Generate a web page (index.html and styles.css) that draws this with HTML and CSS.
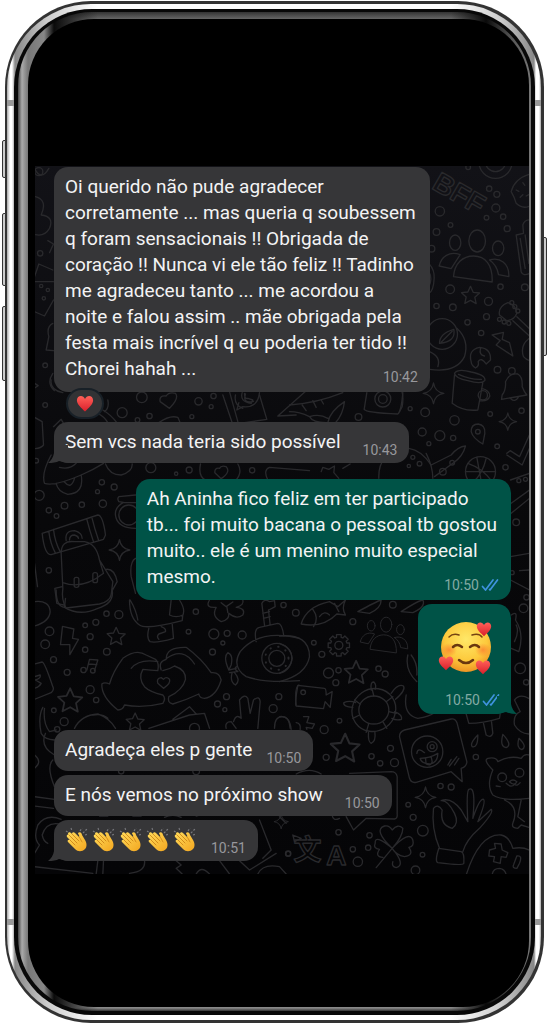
FILE: index.html
```html
<!DOCTYPE html>
<html lang="pt-BR">
<head>
<meta charset="utf-8">
<meta name="viewport" content="width=device-width, initial-scale=1">
<title>Conversa</title>
<link rel="stylesheet" href="styles.css">
</head>
<body>
<svg class="defs" aria-hidden="true">
  <defs>
    <radialGradient id="skin" cx=".5" cy=".35" r=".65"><stop offset="0" stop-color="#ffe868"/><stop offset=".65" stop-color="#fdc93c"/><stop offset="1" stop-color="#ee9424"/></radialGradient>
    <radialGradient id="blush"><stop offset="0" stop-color="#fb8030" stop-opacity=".8"/><stop offset="1" stop-color="#fb8030" stop-opacity="0"/></radialGradient>
    <linearGradient id="red" x2="0" y2="1"><stop offset="0" stop-color="#ff6058"/><stop offset="1" stop-color="#d91f2b"/></linearGradient>
    <linearGradient id="hand" x2="1" y2="1"><stop offset="0" stop-color="#ffdc5c"/><stop offset="1" stop-color="#f3a61f"/></linearGradient>
    <symbol id="heart" viewBox="0 0 20 20"><path fill="url(#red)" d="M10 19C6 15 1 11 1 6.500C1 1 8 0 10 5C12 0 19 1 19 6.500C19 11 14 15 10 19Z"/></symbol>
    <symbol id="ticks" viewBox="0 0 18 14"><path fill="none" stroke="#3f93df" stroke-width="1.700" stroke-linecap="round" stroke-linejoin="round" d="M1.500 8.500L4.500 12L12 2M8.500 11.500L9 12L16.500 2"/></symbol>
    <symbol id="clap" viewBox="0 0 24 26">
      <path fill="none" stroke="#77777c" stroke-width="1.200" stroke-dasharray="2 1.500" d="M1 4L4 6M6 1L7 4M15 4L17 1M18 6L22 2M20 8L23 7"/>
      <path fill="url(#hand)" d="M13 6C15 4 17 6 17 8L20 13C22 16 22 20 20 22C17 25 13 25 10 22L3 15C2 14 3 12 5 13L2 10C1 8 3 7 4 8L3 7C3 5 5 5 6 6L7 7C7 5 9 5 10 6L14 10C15 9 13 7 13 6Z"/>
      <path fill="none" stroke="#c97c12" stroke-width=".8" stroke-linecap="round" d="M5 13L10 18M4 8L12 16M7 7L14 14M14 10C16 12 16 14 17 15"/>
    </symbol>
    <path id="star" d="M0-26L8-8L27-6L13 7L17 26L0 16L-17 25L-13 6L-27-7L-8-9Z"/>
    <path id="spark" d="M0-31Q4-4 31 0Q4 4 0 31Q-4 4-31 0Q-4-4 0-31Z"/>
    <path id="bolt" d="M-20-43L14-35L10-7L28-4L2 42L2 12L-26 12Z"/>
    <path id="gear" d="M24-7L32-7L32 7L24 7L22 12L28 18L18 28L12 22L7 24L7 32L-7 32L-7 24L-12 22L-18 28L-28 18L-22 12L-24 7L-32 7L-32-7L-24-7L-22-12L-28-18L-18-28L-12-22L-7-24L-7-32L7-32L7-24L12-22L18-28L28-18L22-12Z"/>
    <g id="people"><ellipse cx="-66" cy="-48" rx="17" ry="23"/><ellipse cy="-53" rx="25" ry="33"/><ellipse cx="63" cy="-31" rx="17" ry="22"/><path d="M-71 54C-68 14-43-8-11-8C25-8 47 19 45 70ZM-114 22C-108-6-83-24-51-12L-78 30ZM37 4C67-6 97 14 95 54L64 48C61 29 52 14 37 4Z"/></g>
  </defs>
</svg>

<main class="phone">
  <span class="key key-mute"></span><span class="key key-up"></span><span class="key key-down"></span><span class="key key-power"></span>
  <div class="chrome"><div class="bezel"><div class="glass"><div class="screen">
    <section class="chat" aria-label="Conversa">
      <svg class="wallpaper" viewBox="35 166 495 708" preserveAspectRatio="xMidYMid slice" aria-hidden="true">
        <g transform="translate(0 120) scale(.33333)">
          <path d="M105 145Q125 185 148 145M108 230Q145 240 125 285Q165 290 150 325Q135 350 108 344M145 362L162 372L150 398M105 470L118 432L160 450M105 485H162M105 575L135 588L162 540M160 610Q140 620 148 650L140 690L162 692M105 790L116 797L105 804M160 760Q140 790 165 812"/>
          <circle cx="118" cy="155" r="12"/><circle cx="122" cy="400" r="8"/><circle cx="125" cy="498" r="5"/><circle cx="145" cy="510" r="5"/><circle cx="133" cy="535" r="5"/><circle cx="137" cy="736" r="7"/>
        </g>
        <g transform="translate(400 160) scale(.33333)">
          <text class="letters" x="94" y="84" transform="rotate(30 94 84)">BFF</text>
          <use href="#people" x="233" y="296"/>
          <circle cx="288" cy="5" r="50"/><circle cx="288" cy="5" r="30"/>
          <path d="M392 42Q345 55 335 95Q345 112 350 130Q370 150 395 136M350 90L358 94M370 68L376 76M362 112L370 104M380 108L388 104"/>
          <path d="M393 180Q375 178 370 195L372 220L350 225L365 335Q370 350 392 340M362 235L377 325M377 225L388 310"/>
          <path d="M88 310Q106 330 104 355Q102 395 88 400M88 335Q100 355 88 380"/>
          <use href="#star" x="213" y="405"/>
          <path d="M300 465Q295 440 325 428Q350 435 352 460Q345 480 322 482ZM340 482L392 530M352 470L392 508"/>
          <g><circle cx="337" cy="428" r="6"/><circle cx="346" cy="440" r="6"/><circle cx="355" cy="453" r="6"/><circle cx="300" cy="478" r="6"/><circle cx="314" cy="486" r="6"/><circle cx="328" cy="490" r="6"/></g>
          <path d="M278 525L312 517L308 538L330 548L340 588L290 555L302 542ZM392 533Q360 555 372 590Q380 600 392 602"/>
          <circle cx="128" cy="522" r="46"/><path d="M172 505Q210 540 195 590Q170 640 90 628M120 550Q120 520 163 508Q170 545 120 550ZM125 547L158 514M90 575Q125 590 115 620"/>
          <path d="M215 605Q205 570 240 562Q275 565 273 600L260 612Q245 590 236 605Q240 618 228 624Q215 615 215 605M243 566Q238 585 255 588"/>
          <path d="M165 640Q175 625 215 636Q260 645 256 662Q245 674 205 662Q168 655 165 640ZM165 645L158 730Q190 755 235 750L250 668M177 643Q215 660 246 658M246 685Q270 690 271 708Q265 726 240 722"/><circle cx="250" cy="706" r="14"/>
          <path d="M306 718L308 705Q320 690 318 665Q330 638 355 642Q370 650 368 680Q374 695 382 705ZM334 716Q346 728 356 713"/><circle cx="337" cy="633" r="10"/>
          <use href="#spark" x="102" y="700"/><use href="#spark" transform="translate(325 785) scale(.85)"/>
          <path d="M250 852Q220 835 215 815Q215 792 236 792Q258 795 256 820Z"/><circle cx="235" cy="815" r="7"/>
          <circle cx="243" cy="935" r="45"/><path d="M205 910Q250 925 278 965M222 965Q250 940 260 895M198 935H288M232 892L248 980"/>
          <path d="M322 880L332 872L360 890L392 820M322 885L368 915L392 860M28 865Q65 870 95 915L155 885Q175 860 198 858Q190 890 160 910L105 950M0 680Q15 700 8 740L0 755"/>
          <circle cx="121" cy="154" r="14"/><circle cx="206" cy="22" r="7"/><circle cx="269" cy="86" r="8"/><circle cx="292" cy="103" r="9"/><circle cx="289" cy="144" r="12"/><circle cx="261" cy="173" r="7"/><circle cx="311" cy="170" r="8"/><circle cx="323" cy="206" r="9"/><circle cx="153" cy="195" r="7"/><circle cx="111" cy="216" r="10"/><circle cx="96" cy="266" r="10"/><circle cx="152" cy="388" r="13"/><circle cx="303" cy="380" r="8"/><circle cx="376" cy="382" r="10"/><circle cx="267" cy="424" r="12"/><circle cx="111" cy="438" r="8"/><circle cx="160" cy="442" r="10"/><circle cx="261" cy="470" r="9"/><circle cx="204" cy="487" r="8"/><circle cx="245" cy="519" r="8"/><circle cx="294" cy="629" r="10"/><circle cx="77" cy="757" r="13"/><circle cx="32" cy="746" r="6"/><circle cx="68" cy="816" r="12"/><circle cx="121" cy="827" r="15"/><circle cx="165" cy="781" r="14"/><circle cx="161" cy="834" r="8"/><circle cx="88" cy="851" r="6"/><circle cx="272" cy="762" r="7"/><circle cx="366" cy="752" r="8"/><circle cx="293" cy="859" r="7"/><circle cx="318" cy="922" r="8"/><circle cx="40" cy="892" r="6"/><circle cx="60" cy="911" r="7"/><circle cx="28" cy="918" r="5"/><circle cx="158" cy="908" r="7"/><circle cx="130" cy="935" r="10"/>
        </g>
        <g transform="translate(30 380) scale(.33333)">
          <path d="M15 112L38 125L42 195Q35 205 15 206M420 85L392 65Q388 45 410 48Q418 35 438 40Q450 55 420 85ZM580 45L608 128M600 35L625 125M690 45L712 118L600 135M835 28L745 108L800 105M65 0Q60 30 100 38M72 140L95 118L108 140M388 128Q420 105 445 112L452 128M205 100Q225 110 235 128M220 90Q245 105 262 128M235 60Q240 85 225 95"/>
          <path d="M640 85Q612 75 618 45M690 38Q685 85 640 80L622 90L628 68M638 38Q630 65 665 70L670 60L655 55Q645 58 645 40M648 42Q638 72 672 64"/>
          <path d="M65 225Q35 280 45 310Q75 320 155 285Q190 270 222 250M90 262Q120 270 140 250M80 310Q85 335 115 343Q165 340 155 285M105 306Q125 330 135 295M228 252Q240 285 275 285Q310 275 308 252M513 252Q505 290 530 302M575 296L556 278Q555 262 570 265Q575 255 590 260Q605 275 575 296ZM625 252Q640 275 620 300M715 300Q700 270 720 262L840 272"/>
          <path d="M38 460L205 405Q220 405 228 465L222 478L65 524Q45 525 38 460ZM58 455Q62 490 78 520M72 448Q76 485 92 515M172 418Q180 450 192 485M187 412Q195 445 207 480M110 482Q105 452 135 452Q158 458 158 475M120 480Q120 465 135 465Q146 468 147 475M95 520Q95 480 135 485H165Q200 490 210 540L250 605L245 645Q240 665 210 672L110 684Q95 660 100 625ZM100 608Q160 630 222 580M210 540L222 580M98 620L76 625L82 670L102 675M230 568Q255 565 263 605L248 632"/>
          <rect x="134" y="592" width="14" height="30" rx="6"/><rect x="190" y="578" width="14" height="30" rx="6"/>
          <path d="M318 345L268 350Q262 355 268 365L282 367Q250 385 260 415Q270 445 318 445M318 535Q300 545 305 590L318 640M15 550L24 620M318 368L282 367"/><circle cx="298" cy="405" r="30"/><use href="#spark" x="270" y="510"/>
          <circle cx="337" cy="52" r="16"/><circle cx="278" cy="98" r="15"/><circle cx="507" cy="64" r="11"/><circle cx="552" cy="48" r="8"/><circle cx="545" cy="80" r="6"/><circle cx="487" cy="110" r="6"/><circle cx="360" cy="108" r="8"/><circle cx="324" cy="120" r="7"/><circle cx="47" cy="75" r="7"/><circle cx="20" cy="242" r="7"/><circle cx="364" cy="263" r="15"/><circle cx="479" cy="270" r="9"/><circle cx="440" cy="281" r="5"/><circle cx="668" cy="271" r="8"/><circle cx="29" cy="346" r="15"/><circle cx="217" cy="307" r="8"/><circle cx="254" cy="321" r="9"/><circle cx="204" cy="335" r="6"/><circle cx="220" cy="371" r="11"/><circle cx="157" cy="374" r="8"/><circle cx="105" cy="377" r="10"/><circle cx="58" cy="391" r="8"/><circle cx="81" cy="408" r="7"/><circle cx="58" cy="571" r="8"/>
        </g>
        <g transform="translate(290 380) scale(.33333)">
          <path d="M232 38L224 88Q230 98 325 102Q335 95 340 38M0 75Q80 70 160 38M0 95Q30 95 60 110Q70 128 110 128M38 75L50 92M70 62L80 82M95 60L102 72M115 128Q120 95 165 65Q160 105 138 128M60 110Q90 100 115 115M95 275L100 262L118 268L135 258L133 278L148 295M160 265L182 252M268 295Q265 220 340 205M410 220Q430 260 430 295M663 300L720 280M665 370L720 330M665 400L720 355M690 572L720 570M663 600L720 630M663 530L720 520"/>
          <circle cx="280" cy="57" r="24"/><circle cx="280" cy="57" r="13"/><circle cx="207" cy="111" r="10"/><circle cx="688" cy="302" r="6"/><circle cx="708" cy="298" r="6"/><circle cx="680" cy="427" r="10"/><circle cx="668" cy="578" r="6"/><circle cx="711" cy="652" r="8"/>
        </g>
        <g transform="translate(30 590) scale(.33333)">
          <path d="M80 0Q80 50 105 52L108 25M105 52Q150 80 205 55Q255 40 248 0M15 35Q60 30 62 65Q60 95 15 108M300 30Q300 85 330 105Q350 120 458 92L460 75Q440 85 420 75L425 30M302 30Q320 60 325 90M450 30Q470 60 458 80M358 115Q350 145 362 155Q380 160 432 145L428 100M395 110Q410 115 408 125L388 132Q380 140 388 148"/>
          <path d="M540 30Q525 55 560 52Q545 80 575 95Q600 90 598 70Q620 90 640 75Q650 55 620 52Q645 45 640 30M575 38L590 50L610 36M592 50L595 68"/>
          <path d="M697 40L705 105M717 60L722 105M697 40Q705 25 720 35L735 32L737 50L718 60M700 70L720 65M702 85L722 80M680 155Q672 115 690 112L745 100Q758 100 763 138M810 145Q690 115 632 185Q605 230 650 260Q710 280 810 272M622 230Q610 235 625 245M598 240Q580 200 595 188Q612 195 605 225ZM598 240L620 235M600 248L622 245M608 248Q600 275 618 285Q635 270 615 248"/>
          <circle cx="742" cy="205" r="45"/><circle cx="742" cy="205" r="24"/><circle class="dots" cx="742" cy="205" r="35"/>
          <path d="M280 205Q320 175 350 195L378 208Q390 220 385 242Q365 240 340 238Q325 265 345 290Q360 305 400 315Q410 325 400 340Q340 355 285 345Q280 360 265 360Q215 320 217 282Q225 275 240 282Q250 245 280 205M305 235Q330 205 385 215M395 240Q385 215 410 208Q410 170 470 172Q515 205 545 248Q570 245 575 270Q560 320 525 325Q510 325 508 312Q470 330 430 342Q412 338 418 320Q460 300 468 268Q470 240 435 228Q420 238 400 242M412 205Q460 170 495 222M402 295L385 280Q380 265 395 263L402 268Q410 258 420 268Q425 280 402 295Z"/>
          <use href="#star" x="260" y="138"/><use href="#bolt" x="119" y="152"/><use href="#star" transform="translate(122 330) scale(1.350)"/><use href="#star" x="317" y="395"/>
          <path d="M172 240L180 208L205 210L195 242M178 222L202 224M15 222L38 216Q45 216 70 290Q75 300 65 308L15 328M15 260L32 255Q35 265 18 270L35 280Q30 290 15 295M40 352Q25 380 35 430Q45 448 75 450M45 355Q40 400 60 425L80 420M135 415Q155 375 205 372Q240 385 258 415M190 375Q220 370 235 385M358 415L480 375L525 370L540 415M430 388L480 350L500 372M590 415Q585 395 605 395L620 415M612 395Q620 370 635 385L630 330Q645 310 655 325L662 370L672 330Q690 315 692 335L685 415M735 415Q735 380 758 380Q780 380 782 415M800 345Q795 290 808 285"/>
          <circle cx="162" cy="240" r="8"/><circle cx="190" cy="242" r="7"/><circle cx="495" cy="415" r="15"/>
          <circle cx="231" cy="71" r="8"/><circle cx="268" cy="74" r="12"/><circle cx="199" cy="97" r="9"/><circle cx="167" cy="106" r="7"/><circle cx="182" cy="140" r="9"/><circle cx="167" cy="179" r="8"/><circle cx="232" cy="185" r="10"/><circle cx="60" cy="124" r="13"/><circle cx="47" cy="163" r="13"/><circle cx="72" cy="209" r="9"/><circle cx="113" cy="247" r="9"/><circle cx="182" cy="299" r="12"/><circle cx="200" cy="330" r="8"/><circle cx="73" cy="361" r="7"/><circle cx="104" cy="395" r="12"/><circle cx="83" cy="418" r="8"/><circle cx="499" cy="65" r="8"/><circle cx="477" cy="125" r="7"/><circle cx="553" cy="132" r="15"/><circle cx="593" cy="130" r="9"/><circle cx="638" cy="135" r="12"/><circle cx="580" cy="159" r="6"/><circle cx="549" cy="186" r="9"/><circle cx="591" cy="320" r="9"/><circle cx="564" cy="342" r="9"/><circle cx="586" cy="359" r="6"/><circle cx="748" cy="320" r="9"/><circle cx="731" cy="356" r="12"/><circle cx="762" cy="45" r="8"/>
        </g>
        <g transform="translate(280 600) scale(.33333)">
          <path d="M65 72Q80 20 150 5L175 20L198 0Q185 25 198 45L172 42Q130 85 65 72ZM100 28Q120 55 102 80M120 50Q135 30 150 45M165 10L178 35M235 35Q290 5 305 0Q305 25 270 40ZM365 35Q410 5 430 0Q440 20 400 38ZM0 108Q90 100 90 170Q80 225 0 245M0 130Q38 145 38 175Q35 205 0 220"/>
          <use href="#people" transform="translate(320 110) scale(.68)"/>
          <use href="#gear" x="178" y="136"/><circle cx="178" cy="136" r="12"/>
          <use href="#star" transform="translate(230 216) scale(1.300)"/><use href="#star" transform="translate(197 443) scale(1.600)"/><use href="#spark" x="438" y="592"/>
          <path d="M55 256L135 265Q140 265 140 285L158 275L152 322L137 305L132 326L50 318Q45 315 55 256Z"/><circle cx="71" cy="277" r="7"/>
          <ellipse cx="283" cy="330" rx="67" ry="63" transform="rotate(-35 283 330)"/><ellipse cx="283" cy="330" rx="45" ry="42"/>
          <path d="M283 288L278 268M320 305L340 290M328 335L350 340M310 365L322 385M268 370L260 397M240 345L220 355M242 312L225 300M275 270Q272 245 283 246Q292 255 287 268M335 280Q355 250 372 258Q380 270 348 298M345 335Q370 345 366 358Q350 362 337 355M267 397Q265 425 275 430Q290 425 286 395M220 322Q190 320 193 308Q210 300 228 308M72 350L88 350L82 368L105 372L98 385L80 382L82 388M0 350Q30 345 35 388M62 388Q65 370 50 368"/>
          <path d="M360 410Q360 395 375 390L515 357Q528 355 533 370L562 485Q562 500 545 505L548 545L515 515L410 547Q395 550 390 535ZM505 495L515 478M510 498L532 470M525 495L538 475"/>
          <circle cx="443" cy="455" r="47"/><circle cx="458" cy="440" r="15"/><circle cx="458" cy="440" r="6"/><path d="M412 460Q415 440 435 458M422 475Q450 475 475 460Q475 490 450 492Q425 490 422 475ZM438 475L440 492Q455 500 458 485L455 470"/>
          <path d="M385 165Q375 210 412 245M395 165Q415 190 412 225M380 285Q370 345 415 355M415 355Q450 350 462 340M560 342L568 370Q610 370 660 355L662 342M612 370L620 405Q635 415 640 400L636 365M705 300Q720 280 748 295M705 300L722 335Q700 345 705 375Q720 400 748 402M695 45Q715 30 708 60Q735 100 718 155L695 145M710 75Q720 95 705 125"/>
          <path d="M595 405Q570 430 578 440Q595 445 595 405ZM670 403Q660 440 680 443Q700 435 670 403ZM718 415Q710 445 727 449Q745 440 718 415ZM640 510Q610 480 625 475Q650 470 655 485Q690 465 725 475Q735 460 748 465M640 510Q620 555 640 585Q670 605 748 595M690 545Q700 535 712 545Q705 560 690 545M680 550Q695 565 705 553Q712 560 722 548M650 558L662 560M675 600Q720 620 700 670Q695 685 715 685L725 675L748 682M725 600L715 650L735 665"/>
          <circle cx="668" cy="532" r="13"/><circle cx="720" cy="518" r="13"/>
          <path d="M480 745Q455 685 462 625Q475 610 488 630Q480 675 518 685Q540 670 525 640Q505 600 485 602Q515 590 545 630L565 665Q560 575 568 568Q590 555 580 655M580 655Q600 595 612 598Q620 605 595 665M595 665L635 628Q645 635 600 685Q560 720 550 755M478 745L545 755Q555 758 553 790Q550 798 475 788Q465 785 478 745Z"/>
          <path d="M560 825Q600 700 665 705Q690 710 700 745Q730 740 748 750M630 750L648 745L645 730L665 732L668 750L685 758L680 772L665 770L662 790L642 785L645 770L628 768ZM712 768Q730 765 720 790L712 805Q698 805 702 795ZM638 825Q640 805 660 805Q678 808 680 825"/>
          <path d="M200 650L222 690L260 655L345 657Q355 655 353 640V530Q350 515 335 515L210 520M50 522Q90 500 125 522M158 645Q160 665 180 655M338 745Q280 690 315 678Q330 675 338 690Q355 670 370 685Q370 710 338 745Q390 690 400 720Q405 740 388 742Q405 765 375 770Q350 765 338 745Q380 795 350 803Q335 800 340 785M338 745Q285 700 287 730Q280 745 300 748Q285 770 310 772M338 745L290 803"/>
          <text class="letters" x="42" y="780">文</text><text class="letters" x="140" y="796">A</text>
          <circle cx="49" cy="38" r="10"/><circle cx="103" cy="128" r="7"/><circle cx="127" cy="163" r="9"/><circle cx="220" cy="65" r="9"/><circle cx="340" cy="14" r="10"/><circle cx="147" cy="219" r="15"/><circle cx="177" cy="211" r="8"/><circle cx="169" cy="248" r="9"/><circle cx="297" cy="206" r="8"/><circle cx="317" cy="222" r="9"/><circle cx="180" cy="362" r="7"/><circle cx="134" cy="389" r="12"/><circle cx="140" cy="472" r="9"/><circle cx="276" cy="469" r="8"/><circle cx="302" cy="490" r="8"/><circle cx="333" cy="445" r="9"/><circle cx="345" cy="488" r="12"/><circle cx="483" cy="558" r="8"/><circle cx="515" cy="561" r="9"/><circle cx="589" cy="471" r="8"/><circle cx="386" cy="614" r="7"/><circle cx="401" cy="652" r="9"/><circle cx="430" cy="692" r="16"/><circle cx="270" cy="706" r="8"/><circle cx="177" cy="697" r="8"/><circle cx="220" cy="748" r="8"/><circle cx="266" cy="743" r="8"/><circle cx="235" cy="785" r="14"/><circle cx="26" cy="761" r="7"/><circle cx="429" cy="764" r="7"/><circle cx="408" cy="811" r="13"/><circle cx="722" cy="205" r="16"/><circle cx="740" cy="247" r="8"/><circle cx="732" cy="25" r="13"/>
        </g>
        <g transform="translate(30 720) scale(.33333)">
          <path d="M48 40Q30 80 75 105M70 120Q50 140 75 200M15 105Q40 125 15 145M15 230L75 238M15 258L72 265M95 298Q50 280 25 315Q10 355 30 375L15 400M90 312Q50 305 38 345Q42 365 55 370M15 440L190 460M205 422L200 462M222 422L220 462M345 422Q350 455 300 460M440 422L455 435L440 445L458 462M500 462Q515 435 540 462M570 422L600 462M630 422L660 450L740 400M690 300L725 390L700 415M210 288H235M310 288H335M405 292Q430 280 455 292M500 288L545 275M750 290L770 310M685 462Q700 430 750 440L770 462M790 345L815 355L795 365Z"/>
          <use href="#spark" transform="translate(755 305) scale(.7)"/><circle cx="776" cy="401" r="8"/><circle cx="275" cy="154" r="8"/><circle cx="500" cy="154" r="10"/>
        </g>
      </svg>

      <article class="bubble in long">
        <p class="text">Oi querido não pude agradecer<br>corretamente ... mas queria q soubessem<br>q foram sensacionais !! Obrigada de<br>coração !! Nunca vi ele tão feliz !! Tadinho<br>me agradeceu tanto ... me acordou a<br>noite e falou assim .. mãe obrigada pela<br>festa mais incrível q eu poderia ter tido !!<br>Chorei hahah ...</p>
        <span class="meta"><time>10:42</time></span>
        <span class="reaction"><svg role="img" aria-label="Coração"><use href="#heart"/></svg></span>
      </article>
      <article class="bubble in short tail after-reaction">
        <p class="text">Sem vcs nada teria sido possível</p>
        <span class="meta"><time>10:43</time></span>
      </article>
      <article class="bubble out long turn">
        <p class="text">Ah Aninha fico feliz em ter participado<br>tb... foi muito bacana o pessoal tb gostou<br>muito.. ele é um menino muito especial<br>mesmo.</p>
        <span class="meta"><time>10:50</time><svg class="ticks" role="img" aria-label="Lida"><use href="#ticks"/></svg></span>
      </article>
      <article class="bubble out sticker tail">
        <svg class="love" viewBox="0 0 54 56" role="img" aria-label="Rosto sorridente com corações">
          <circle cx="28" cy="28" r="25" fill="url(#skin)"/>
          <ellipse cx="11" cy="31" rx="8" ry="7" fill="url(#blush)"/><ellipse cx="45" cy="31" rx="8" ry="7" fill="url(#blush)"/>
          <path fill="none" stroke="#754312" stroke-width="1.500" stroke-linecap="round" d="M11 18Q15 14 21 16M34 16Q41 14 44 18"/>
          <path fill="none" stroke="#69370f" stroke-width="2.500" stroke-linecap="round" d="M15 28Q19 24 24 28M32 28Q37 24 41 28M21 41Q28 47 35 41"/>
          <use href="#heart" x="38" y="1" width="16" height="18"/><use href="#heart" x="0" y="35" width="16" height="18"/><use href="#heart" x="37" y="39" width="16" height="18"/>
        </svg>
        <span class="meta"><time>10:50</time><svg class="ticks" role="img" aria-label="Lida"><use href="#ticks"/></svg></span>
      </article>
      <article class="bubble in short snug turn">
        <p class="text">Agradeça eles p gente</p>
        <span class="meta"><time>10:50</time></span>
      </article>
      <article class="bubble in short">
        <p class="text">E nós vemos no próximo show</p>
        <span class="meta"><time>10:50</time></span>
      </article>
      <article class="bubble in short snug tail">
        <p class="text claps" role="img" aria-label="Aplausos"><svg><use href="#clap"/></svg><svg><use href="#clap"/></svg><svg><use href="#clap"/></svg><svg><use href="#clap"/></svg><svg><use href="#clap"/></svg></p>
        <span class="meta"><time>10:51</time></span>
      </article>
    </section>
  </div></div></div></div>
</main>
</body>
</html>
```

FILE: styles.css
```css
* { box-sizing: border-box; }

body {
  margin: 0;
  background: #fff;
  font-family: Roboto, "Liberation Sans", sans-serif;
}

.defs { position: absolute; width: 0; height: 0; }

.phone {
  position: relative;
  margin: 1px 3px 1px 5px;
  padding: 3px 3px 3px 2px;
  border-radius: 86px;
  background: #333;
}

.chrome {
  position: relative;
  padding: 5px 6px 5px 7px;
  border-radius: 84px;
  background:
    linear-gradient(#999, #999) left 0 top 96px / 100% 6px no-repeat,
    linear-gradient(#999, #999) left 0 bottom 95px / 100% 6px no-repeat,
    linear-gradient(90deg, #aaa 0, #fff 3px, #fff 5px, #888 8px, #ccc 40px, #fff 90px, #fff calc(100% - 90px), #ccc calc(100% - 40px), #888 calc(100% - 7px), #fff calc(100% - 5px), #fff calc(100% - 2px), #aaa 100%);
}

.bezel {
  padding: 3px 4px 4px;
  border-radius: 78px;
  background: #080808;
}

.glass {
  padding: 7px 2px 4px 10px;
  border-radius: 74px;
  background:
    linear-gradient(90deg, #444 0, #aaa 4px, #777 10px, #888 26px, #0a0a0a 36px, transparent 80px, transparent calc(100% - 80px), #0a0a0a calc(100% - 45px), #555 calc(100% - 20px), #777 100%),
    linear-gradient(#333, #666 7px, #888 50%, #888 calc(100% - 3px), #333);
}

.screen {
  padding: 147px 0 133px 7px;
  border-radius: 66px;
  background: #000;
}

.chat {
  position: relative;
  display: flex;
  flex-direction: column;
  gap: 4px;
  padding: 1px 18px 13px 19px;
  background: linear-gradient(#121217, #08080a 50%, #050507);
}

.wallpaper {
  position: absolute;
  inset: 0;
  width: 100%;
  height: 100%;
  fill: none;
  stroke: #29292c;
  stroke-width: 4;
  stroke-linejoin: round;
  stroke-linecap: round;
}

.letters { font: bold 84px "Liberation Sans", "Noto Sans CJK SC", sans-serif; }
.dots { stroke-width: 6; stroke-dasharray: 1 23; }

.bubble {
  --fill: #363638;
  position: relative;
  max-width: 100%;
  padding: 7px 12px 7px 11px;
  border-radius: 14px;
  background: var(--fill);
  color: #f3f3f4;
}

.in { align-self: flex-start; }
.out { --fill: #005347; align-self: flex-end; }

.text {
  margin: 0;
  font-size: 19px;
  line-height: 26px;
}

.long { display: grid; padding: 7px 14px 10px 11px; }
.long .text,
.long .meta { grid-area: 1 / 1; }
.long .meta { align-self: end; justify-self: end; margin: 0 -2px -4px 0; }

.short {
  display: flex;
  align-items: flex-end;
  gap: 22px;
  padding-bottom: 8px;
}
.short .meta { margin-bottom: -4px; }
.snug { gap: 14px; }
.turn { margin-top: 12px; }
.after-reaction { margin-top: 26px; }

.meta {
  display: flex;
  align-items: center;
  gap: 2px;
  color: #98989c;
  font-size: 14px;
  line-height: 18px;
}
.out .meta { color: #83aaa3; }
.ticks { width: 18px; height: 14px; }

.sticker {
  display: flex;
  flex-direction: column;
  gap: 16px;
  padding: 15px 11px 5px 20px;
}
.sticker .meta { align-self: flex-end; }
.love { width: 54px; height: 56px; margin-right: 8px; }

.tail::before {
  content: "";
  position: absolute;
  bottom: 0;
  left: -6px;
  width: 20px;
  height: 18px;
  background: var(--fill);
  clip-path: path("M6 0V8Q5 14 0 18Q7 18 11 16L20 18V0Z");
}
.out.tail::before { left: auto; right: -6px; transform: scaleX(-1); }

.reaction {
  position: absolute;
  left: 12px;
  bottom: -27px;
  display: grid;
  place-items: center;
  width: 38px;
  height: 31px;
  border: 2px solid #182027;
  border-radius: 16px;
  background: #323335;
}
.reaction svg { width: 18px; height: 19px; }

.claps { display: flex; align-items: center; gap: 3px; height: 26px; }
.claps svg { width: 24px; height: 26px; }

.key {
  position: absolute;
  left: -3px;
  width: 4px;
  border: 1px solid #333;
  border-radius: 2px 0 0 2px;
  background: #ccc;
}
.key-mute { top: 139px; height: 38px; }
.key-up { top: 212px; height: 73px; }
.key-down { top: 305px; height: 75px; }
.key-power { top: 236px; right: -3px; left: auto; height: 119px; border-radius: 0 2px 2px 0; }
```
